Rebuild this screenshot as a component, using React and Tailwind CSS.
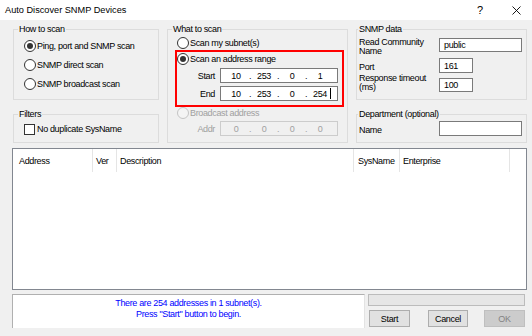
import React from "react";

const font = "font-['Liberation_Sans',Arial,sans-serif] tracking-[-0.35px]";

function Group({ title, className, legendClass = "ml-[4px]", bodyClass = "", children }) {
  return (
    <fieldset className={`border border-[#dcdcdc] ${className}`}>
      <legend className={`${legendClass} px-[1px] leading-[12px]`}>{title}</legend>
      <div className={bodyClass}>{children}</div>
    </fieldset>
  );
}

function Radio({ checked, disabled, label, className = "h-[19px]" }) {
  return (
    <div className={`flex items-center whitespace-nowrap ${className}`}>
      <span
        className={`w-[12px] h-[12px] shrink-0 rounded-full border flex items-center justify-center ${
          disabled ? "border-[#c4c4c4] bg-[#f4f4f4]" : "border-[#333333] bg-white"
        }`}
      >
        {checked && <span className="w-[6px] h-[6px] rounded-full bg-[#333333]" />}
      </span>
      <span className={`ml-[1px] ${disabled ? "text-[#a0a0a0]" : "text-black"}`}>{label}</span>
    </div>
  );
}

function IpField({ parts, disabled, caret }) {
  return (
    <div
      className={`w-[118px] h-[15px] border flex items-center pl-[5px] ${
        disabled ? "border-[#cccccc] bg-[#f0f0f0] text-[#a0a0a0]" : "border-[#7a7a7a] bg-white text-black"
      }`}
    >
      {parts.map((p, i) => (
        <React.Fragment key={i}>
          {i > 0 && <span className="w-[8px] text-center">.</span>}
          <span className="w-[20px] text-center relative">
            {p}
            {caret && i === 3 && (
              <span className="absolute right-[-1px] top-[0px] w-[1px] h-[11px] bg-black" />
            )}
          </span>
        </React.Fragment>
      ))}
    </div>
  );
}

function TextBox({ value, className }) {
  return (
    <div className={`border border-[#7a7a7a] bg-white pl-[4px] flex items-center ${className}`}>
      {value}
    </div>
  );
}

export default function App() {
  return (
    <div className={`w-[532px] h-[336px] bg-[#f0f0f0] overflow-hidden text-[9px] leading-[12px] text-black ${font}`}>
      {/* Title bar */}
      <div className="h-[20px] bg-white flex items-center pl-[5px] text-[9.2px] tracking-normal">
        <span className="flex-1">Auto Discover SNMP Devices</span>
        <span className="text-[11px] mr-[29px]">?</span>
        <svg width="9" height="9" viewBox="0 0 9 9" className="mr-[11px]">
          <path d="M0.5 0.5 L8.5 8.5 M8.5 0.5 L0.5 8.5" stroke="#000" strokeWidth="0.9" />
        </svg>
      </div>

      {/* Top area */}
      <div className="flex pl-[13px] pt-[3px]">
        {/* Column 1 */}
        <div className="w-[146px] flex flex-col">
          <Group title="How to scan" className="h-[77px]" bodyClass="pl-[10px] pt-[1px]">
            <Radio checked label="Ping, port and SNMP scan" />
            <Radio label="SNMP direct scan" />
            <Radio label="SNMP broadcast scan" />
          </Group>
          <Group title="Filters" className="h-[35px] mt-[8px]" bodyClass="pl-[10px]">
            <div className="h-[18px] flex items-center whitespace-nowrap">
              <span className="w-[11px] h-[11px] border border-[#333333] bg-white shrink-0" />
              <span className="ml-[2px]">No duplicate SysName</span>
            </div>
          </Group>
        </div>

        {/* Column 2 */}
        <Group title="What to scan" className="w-[181px] h-[120px] ml-[8px]" bodyClass="pl-[7px]">
          <Radio label="Scan my subnet(s)" className="h-[15px] pl-[2px]" />
          <div className="w-[169px] h-[57px] border-2 border-[#ff0000]">
            <Radio checked label="Scan an address range" className="h-[14px]" />
            <div className="flex items-center mt-[2px]">
              <span className="w-[38px] text-right">Start</span>
              <span className="ml-[5px]">
                <IpField parts={["10", "253", "0", "1"]} />
              </span>
            </div>
            <div className="flex items-center mt-[3px]">
              <span className="w-[38px] text-right">End</span>
              <span className="ml-[5px]">
                <IpField parts={["10", "253", "0", "254"]} caret />
              </span>
            </div>
          </div>
          <Radio disabled label="Broadcast address" className="h-[11px] pl-[2px]" />
          <div className="flex items-center mt-[3px] pl-[2px]">
            <span className="w-[38px] text-right text-[#a0a0a0]">Addr</span>
            <span className="ml-[5px]">
              <IpField parts={["0", "0", "0", "0"]} disabled />
            </span>
          </div>
        </Group>

        {/* Column 3 */}
        <div className="w-[171px] ml-[8px] flex flex-col">
          <Group title="SNMP data" legendClass="ml-[1px]" className="h-[77px]" bodyClass="pl-[2px]">
            <div className="flex items-start mt-[3px]">
              <div className="w-[80px] leading-[9px] whitespace-nowrap">
                Read Community
                <br />
                Name
              </div>
              <TextBox value="public" className="w-[83px] h-[14px]" />
            </div>
            <div className="flex items-center mt-[2px]">
              <div className="w-[80px] leading-[9px] mt-[3px]">Port</div>
              <TextBox value="161" className="w-[34px] h-[15px]" />
            </div>
            <div className="flex items-start mt-[1px]">
              <div className="w-[80px] leading-[9px] whitespace-nowrap">
                Response timeout
                <br />
                (ms)
              </div>
              <TextBox value="100" className="w-[34px] h-[14px] mt-[4px]" />
            </div>
          </Group>
          <Group title="Department (optional)" legendClass="ml-[1px]" className="h-[35px] mt-[8px]" bodyClass="pl-[2px]">
            <div className="flex items-center mt-[1px]">
              <div className="w-[80px] mt-[2px]">Name</div>
              <TextBox value="" className="w-[83px] h-[15px]" />
            </div>
          </Group>
        </div>
      </div>

      {/* List view */}
      <div className="ml-[12px] mt-[5px] w-[515px] h-[142px] border border-[#828790] bg-white">
        <div className="flex h-[23px] items-center whitespace-nowrap">
          <div className="w-[80px] h-full pl-[6px] flex items-center border-r border-[#e5e5e5]">Address</div>
          <div className="w-[24px] h-full pl-[3px] flex items-center border-r border-[#e5e5e5]">Ver</div>
          <div className="w-[237px] h-full pl-[3px] flex items-center border-r border-[#e5e5e5]">Description</div>
          <div className="w-[46px] h-full pl-[4px] flex items-center border-r border-[#e5e5e5]">SysName</div>
          <div className="w-[110px] h-full pl-[3px] flex items-center border-r border-[#e5e5e5]">Enterprise</div>
        </div>
      </div>

      {/* Bottom */}
      <div className="flex ml-[12px] mt-[4px]">
        <div className="w-[353px] h-[34px] border border-[#b0b0b0] border-b-0 border-r-[#e3e3e3] bg-white text-[#0000ff] text-center leading-[11px] pt-[3px]">
          There are 254 addresses in 1 subnet(s).
          <br />
          Press "Start" button to begin.
        </div>
        <div className="ml-[3px] w-[157px] flex flex-col">
          <div className="h-[12px] border border-[#bcbcbc] bg-[#e6e6e6]" />
          <div className="flex mt-[4px]">
            <button className="ml-[1px] w-[41px] h-[17px] border border-[#adadad] bg-[#e1e1e1] leading-[12px]">
              Start
            </button>
            <button className="ml-[18px] w-[40px] h-[17px] border border-[#adadad] bg-[#e1e1e1] leading-[12px]">
              Cancel
            </button>
            <button className="ml-[16px] w-[41px] h-[17px] border border-[#bfbfbf] bg-[#cccccc] text-[#838383] leading-[12px]">
              OK
            </button>
          </div>
        </div>
      </div>
    </div>
  );
}
